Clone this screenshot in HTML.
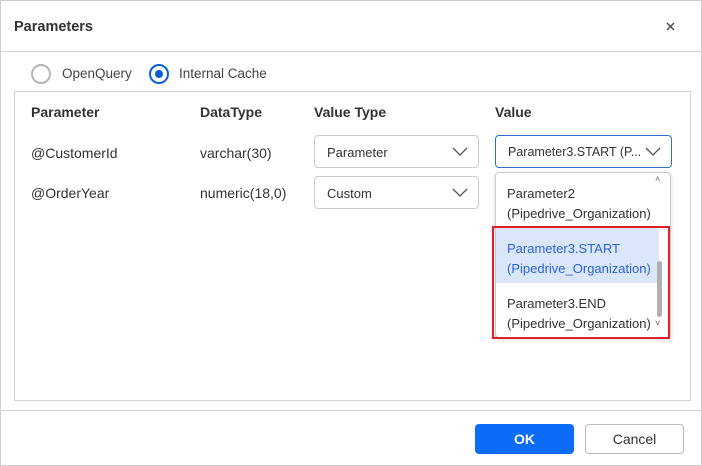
<!DOCTYPE html>
<html><head><style>
*{box-sizing:border-box;margin:0;padding:0}
body{width:702px;height:466px;background:#fff;font-family:"Liberation Sans",sans-serif;position:relative;overflow:hidden;color:#333}
.a{position:absolute}
.t{font-size:14px;color:#333}
.sel{position:absolute;border:1px solid #ccc;border-radius:4px;height:33px;font-size:13px;padding:9px 12px;color:#333;white-space:nowrap}
.chev{position:absolute;right:10px;top:11px}
</style></head><body>
<div class="a" style="left:0;top:0;width:702px;height:466px;border:1px solid #cfcfcf"></div>
<div class="a" style="left:14px;top:19px;font-size:14.5px;font-weight:bold;color:#333">Parameters</div>
<svg class="a" style="left:666px;top:22px" width="9" height="9" viewBox="0 0 9 9"><path d="M1 1L8 8M8 1L1 8" stroke="#444" stroke-width="1.4"/></svg>
<div class="a" style="left:1px;top:51px;width:700px;height:1px;background:#d3d3d3"></div>
<div class="a" style="left:31px;top:64px;width:20px;height:20px;border:2px solid #b5b5b5;border-radius:50%"></div>
<div class="a t" style="left:62px;top:66px;font-size:13.5px;color:#444">OpenQuery</div>
<div class="a" style="left:149px;top:64px;width:20px;height:20px;border:2px solid #0a5fd8;border-radius:50%"></div>
<div class="a" style="left:155px;top:70px;width:8px;height:8px;background:#0a5fd8;border-radius:50%"></div>
<div class="a t" style="left:179px;top:66px;font-size:13.5px;color:#444">Internal Cache</div>
<div class="a" style="left:14px;top:91px;width:677px;height:310px;border:1px solid #d3d3d3"></div>
<div class="a t" style="left:31px;top:104px;font-weight:bold">Parameter</div>
<div class="a t" style="left:200px;top:104px;font-weight:bold">DataType</div>
<div class="a t" style="left:314px;top:104px;font-weight:bold">Value Type</div>
<div class="a t" style="left:495px;top:104px;font-weight:bold">Value</div>
<div class="a t" style="left:31px;top:145px">@CustomerId</div>
<div class="a t" style="left:200px;top:145px">varchar(30)</div>
<div class="a t" style="left:31px;top:185px">@OrderYear</div>
<div class="a t" style="left:200px;top:185px">numeric(18,0)</div>
<div class="sel" style="left:314px;top:135px;width:165px">Parameter<svg class="chev" width="16" height="10"><path d="M1 1l7 7 7-7" stroke="#555" stroke-width="1.3" fill="none"/></svg></div>
<div class="sel" style="left:314px;top:176px;width:165px">Custom<svg class="chev" width="16" height="10"><path d="M1 1l7 7 7-7" stroke="#555" stroke-width="1.3" fill="none"/></svg></div>
<div class="sel" style="left:495px;top:135px;width:177px;border-color:#2b6fd6;font-size:12.5px">Parameter3.START (P...<svg class="chev" width="16" height="10"><path d="M1 1l7 7 7-7" stroke="#555" stroke-width="1.3" fill="none"/></svg></div>
<div class="a" style="left:495px;top:172px;width:176px;height:166px;border:1px solid #ccc;border-radius:4px;box-shadow:0 2px 5px rgba(0,0,0,.15);background:#fff"></div>
<div class="a" style="left:496px;top:228px;width:163px;height:55px;background:#dae7fb"></div>
<div class="a" style="left:507px;top:184px;font-size:13px;line-height:20px;color:#333">Parameter2<br>(Pipedrive_Organization)</div>
<div class="a" style="left:507px;top:239px;font-size:13px;line-height:20px;color:#2d63d8">Parameter3.START<br>(Pipedrive_Organization)</div>
<div class="a" style="left:507px;top:294px;font-size:13px;line-height:20px;color:#333">Parameter3.END<br>(Pipedrive_Organization)</div>
<div class="a" style="left:657px;top:261px;width:5px;height:56px;background:#b0b0b0;border-radius:3px"></div>
<div class="a" style="left:655px;top:174px;font-size:9px;color:#666">˄</div>
<div class="a" style="left:655px;top:318px;font-size:9px;color:#666">˅</div>
<div class="a" style="left:492px;top:226px;width:178px;height:113px;border:2px solid #e3202a"></div>
<div class="a" style="left:1px;top:410px;width:700px;height:1px;background:#d3d3d3"></div>
<div class="a" style="left:475px;top:424px;width:99px;height:30px;background:#0b6cf9;border-radius:4px;color:#fff;font-size:14px;font-weight:bold;text-align:center;line-height:30px">OK</div>
<div class="a" style="left:585px;top:424px;width:99px;height:30px;border:1px solid #bbb;border-radius:4px;color:#333;font-size:14px;text-align:center;line-height:28px">Cancel</div>
</body></html>
